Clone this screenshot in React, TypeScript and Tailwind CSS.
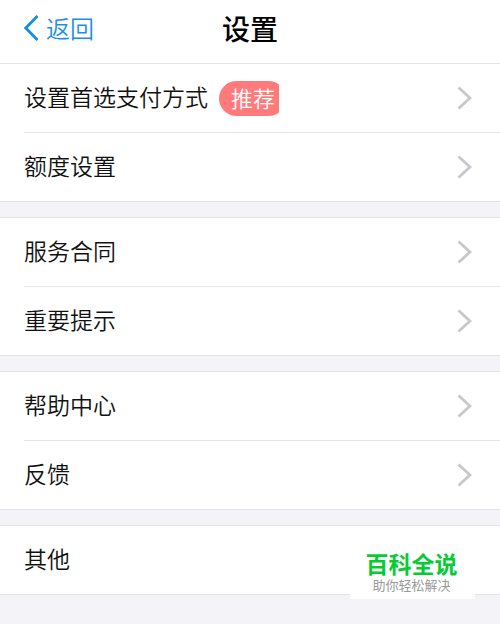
import React from "react";

type Item = { label: string; badge?: string; arrow?: boolean };

const groups: Item[][] = [
  [
    { label: "设置首选支付方式", badge: "推荐", arrow: true },
    { label: "额度设置", arrow: true },
  ],
  [
    { label: "服务合同", arrow: true },
    { label: "重要提示", arrow: true },
  ],
  [
    { label: "帮助中心", arrow: true },
    { label: "反馈", arrow: true },
  ],
  [{ label: "其他" }],
];

function Chevron() {
  return (
    <svg className="ml-auto h-6 w-4 shrink-0" viewBox="0 0 16 24" fill="none" aria-hidden="true">
      <path d="M2.5 1.5 L14 12 L2.5 22.5" stroke="#c7c7cc" strokeWidth="2.8" />
    </svg>
  );
}

function Badge({ text }: { text: string }) {
  return (
    <span className="ml-[11px] block w-[60px] overflow-hidden">
      <span className="block h-[35px] w-[67px] rounded-full bg-[#ff7b7b] pl-3 text-left text-[22px] leading-[33px] font-[350] text-white">
        {text}
      </span>
    </span>
  );
}

function Row({ item }: { item: Item }) {
  return (
    <button
      type="button"
      className="flex h-[68px] w-full items-center pr-7 text-left text-[23px] font-[350] text-[#111111]"
    >
      <span className="pb-1">{item.label}</span>
      {item.badge && <Badge text={item.badge} />}
      {item.arrow && <Chevron />}
    </button>
  );
}

export default function App() {
  return (
    <div className="min-h-screen bg-[#f3f3f8] font-['Noto_Sans_CJK_SC',sans-serif]">
      <header className="grid h-[63px] grid-cols-3 items-center bg-white px-6 pb-2">
        <button type="button" className="flex items-center gap-2 text-2xl leading-8 font-[350] text-[#1d8fe8]">
          <svg className="h-[26px] w-[14px]" viewBox="0 0 14 26" fill="none" aria-hidden="true">
            <path d="M13.5 1 L1.8 13 L13.5 25" stroke="#108ee9" strokeWidth="2.8" />
          </svg>
          返回
        </button>
        <h1 className="text-center text-[28px] leading-9 font-medium text-black">设置</h1>
      </header>
      <main className="flex flex-col gap-[15px]">
        {groups.map((group, i) => (
          <div key={i} className="relative border-y border-[#e3e3e6] bg-white pl-6">
            <ul className="divide-y divide-[#e6e6e8]">
              {group.map((item) => (
                <li key={item.label}>
                  <Row item={item} />
                </li>
              ))}
            </ul>
            {i === groups.length - 1 && (
              <div className="absolute right-[25px] -bottom-[5px] flex h-[52px] w-[125px] flex-col items-center bg-white pt-1 pr-0.5">
                <strong className="text-[23px] leading-6 font-bold text-[#06cb35]">百科全说</strong>
                <span className="text-[13px] leading-5 text-[#999999]">助你轻松解决</span>
              </div>
            )}
          </div>
        ))}
      </main>
    </div>
  );
}
